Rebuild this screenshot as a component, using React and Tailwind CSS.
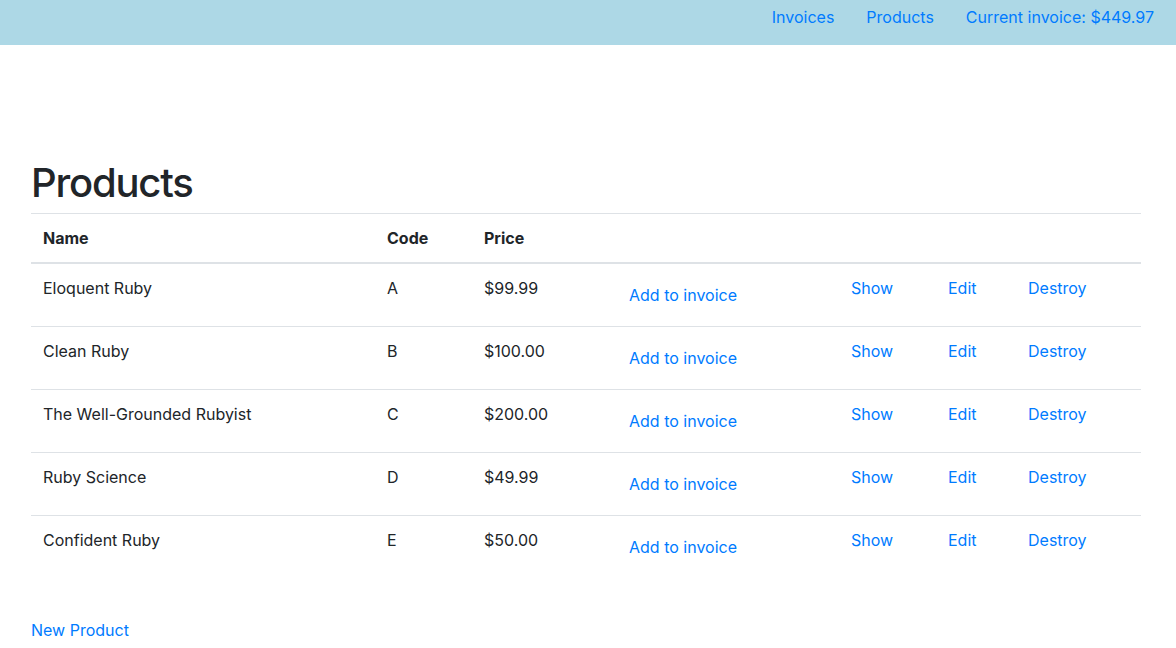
import React from 'react';

const products = [
  { name: 'Eloquent Ruby', code: 'A', price: '$99.99' },
  { name: 'Clean Ruby', code: 'B', price: '$100.00' },
  { name: 'The Well-Grounded Rubyist', code: 'C', price: '$200.00' },
  { name: 'Ruby Science', code: 'D', price: '$49.99' },
  { name: 'Confident Ruby', code: 'E', price: '$50.00' },
];

export default function App() {
  return (
    <div className="min-h-[648px] bg-white text-[#212529] text-base leading-6" style={{ fontFamily: 'Inter, "Noto Sans", sans-serif' }}>
      {/* top nav */}
      <nav className="h-[45px] bg-[#add8e6] flex items-start justify-end gap-8 pt-[5px] pr-[22px]">
        <a className="text-[#007bff]">Invoices</a>
        <a className="text-[#007bff]">Products</a>
        <a className="text-[#007bff]">Current invoice: $449.97</a>
      </nav>

      <main className="px-[31px] pt-[114px]">
        <h1 className="text-[40px] leading-[48px] font-medium mb-1.5 tracking-[-1.2px]">Products</h1>

        <table className="w-[1110px] mb-10">
          <thead>
            <tr className="text-left">
              <th className="w-[344px] px-3 py-3 font-bold border-t border-b-2 border-[#dee2e6] align-bottom">Name</th>
              <th className="w-[97px] px-3 py-3 font-bold border-t border-b-2 border-[#dee2e6] align-bottom">Code</th>
              <th className="w-[133px] px-3 py-3 font-bold border-t border-b-2 border-[#dee2e6] align-bottom">Price</th>
              <th className="w-[234px] px-3 py-3 border-t border-b-2 border-[#dee2e6]" />
              <th className="w-[97px] px-3 py-3 border-t border-b-2 border-[#dee2e6]" />
              <th className="w-[80px] px-3 py-3 border-t border-b-2 border-[#dee2e6]" />
              <th className="px-3 py-3 border-t border-b-2 border-[#dee2e6]" />
            </tr>
          </thead>
          <tbody>
            {products.map((p, i) => (
              <tr key={p.code} className={i > 0 ? 'border-t border-[#dee2e6]' : ''}>
                <td className="px-3 py-3 align-top">{p.name}</td>
                <td className="px-3 py-3 align-top">{p.code}</td>
                <td className="px-3 py-3 align-top">{p.price}</td>
                <td className="px-3 py-3 align-top">
                  <button className="px-[11px] py-1.5 leading-6 border border-transparent text-[#007bff]">Add to invoice</button>
                </td>
                <td className="px-3 py-3 align-top text-[#007bff]">Show</td>
                <td className="px-3 py-3 align-top text-[#007bff]">Edit</td>
                <td className="px-3 py-3 align-top text-[#007bff]">Destroy</td>
              </tr>
            ))}
          </tbody>
        </table>

        <a className="text-[#007bff]">New Product</a>
      </main>
    </div>
  );
}
